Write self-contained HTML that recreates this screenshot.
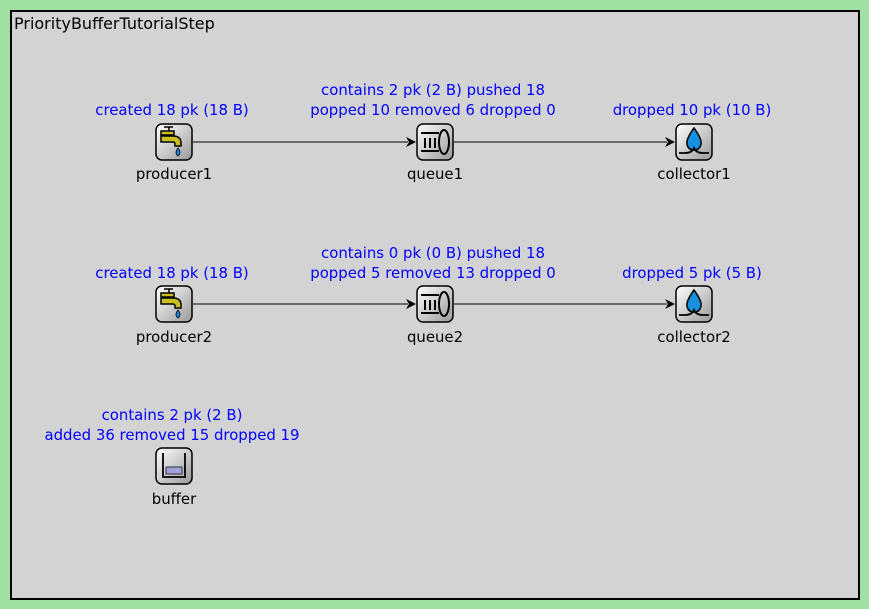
<!DOCTYPE html>
<html><head><meta charset="utf-8"><style>
body{margin:0;width:869px;height:609px;background:#a0e0a0;font-family:"DejaVu Sans","Liberation Sans",sans-serif;overflow:hidden;position:relative}
.frame{position:absolute;left:10px;top:10px;width:846px;height:586px;border:2px solid #000;background:#d3d3d3}
.t{position:absolute;font-size:14.9px;white-space:nowrap;line-height:20px;transform:translateX(-50%);text-align:center}
.b{color:#0000ff}
</style></head><body>
<div class="frame"></div>
<div style="position:absolute;left:14px;top:14px;font-size:16px;line-height:20px">PriorityBufferTutorialStep</div>
<svg width="869" height="609" style="position:absolute;left:0;top:0">
<defs>
<linearGradient id="g" x1="0" y1="0" x2="1" y2="1"><stop offset="0" stop-color="#fff"/><stop offset="1" stop-color="#999"/></linearGradient>
<g id="box"><rect x="-18" y="-18" width="36" height="36" rx="6" fill="url(#g)" stroke="#000" stroke-width="1.5"/></g>
<g id="prod"><use href="#box"/><path d="M-10,-15 h9 M-5,-15 v4 M-13,-11 h13 v4 h-13z M-13,-6 h12 q8,0 8,7 v3 h-6 v-2 q0,-2 -2,-2 h-12z" fill="#c8c020" stroke="#000" stroke-width="1.5"/><path d="M4,6 q-4,5 0,8 q4,-3 0,-8z" fill="#1080e0" stroke="#000" stroke-width=".8"/></g>
<g id="queue"><use href="#box"/><rect x="-14" y="-10" width="18" height="2" fill="#000"/><rect x="-14" y="8" width="18" height="2" fill="#000"/><path d="M-10,-4 v10 M-5,-4 v10 M0,-4 v10" stroke="#000" stroke-width="2"/><ellipse cx="9" cy="0" rx="5" ry="12" fill="none" stroke="#000" stroke-width="2"/></g>
<g id="coll"><use href="#box"/><path d="M0,-14 q-8,11 -7,16 q1,6 7,6 q6,0 7,-6 q1,-5 -7,-16z" fill="#1890e0" stroke="#000" stroke-width="1.5"/><path d="M-15,11 h6 q7,0 9,-5 q2,5 9,5 h6" fill="none" stroke="#000" stroke-width="1.8"/></g>
<g id="buf"><use href="#box"/><path d="M-11,-13 v24 h22 v-24" fill="none" stroke="#000" stroke-width="1.8"/><rect x="-8" y="1" width="16" height="7" fill="#a0a0e0" stroke="#333" stroke-width="1"/></g>
</defs>
<g stroke="#000"><line x1="193" y1="142" x2="408" y2="142"/><line x1="454" y1="142" x2="667" y2="142"/><line x1="193" y1="304" x2="408" y2="304"/><line x1="454" y1="304" x2="667" y2="304"/></g>
<g fill="#000"><path d="M416,142 l-10,-5 l3,5 l-3,5z"/><path d="M675,142 l-10,-5 l3,5 l-3,5z"/><path d="M416,304 l-10,-5 l3,5 l-3,5z"/><path d="M675,304 l-10,-5 l3,5 l-3,5z"/></g>
<use href="#prod" x="174" y="142"/><use href="#queue" x="435" y="142"/><use href="#coll" x="694" y="142"/>
<use href="#prod" x="174" y="304"/><use href="#queue" x="435" y="304"/><use href="#coll" x="694" y="304"/>
<use href="#buf" x="174" y="466"/>
</svg>
<div class="t b" style="left:172px;top:100px">created 18 pk (18 B)</div>
<div class="t b" style="left:433px;top:80px">contains 2 pk (2 B) pushed 18<br>popped 10 removed 6 dropped 0</div>
<div class="t b" style="left:692px;top:100px">dropped 10 pk (10 B)</div>
<div class="t" style="left:174px;top:164px">producer1</div>
<div class="t" style="left:435px;top:164px">queue1</div>
<div class="t" style="left:694px;top:164px">collector1</div>
<div class="t b" style="left:172px;top:263px">created 18 pk (18 B)</div>
<div class="t b" style="left:433px;top:243px">contains 0 pk (0 B) pushed 18<br>popped 5 removed 13 dropped 0</div>
<div class="t b" style="left:692px;top:263px">dropped 5 pk (5 B)</div>
<div class="t" style="left:174px;top:327px">producer2</div>
<div class="t" style="left:435px;top:327px">queue2</div>
<div class="t" style="left:694px;top:327px">collector2</div>
<div class="t b" style="left:172px;top:405px">contains 2 pk (2 B)<br>added 36 removed 15 dropped 19</div>
<div class="t" style="left:174px;top:489px">buffer</div>
</body></html>
